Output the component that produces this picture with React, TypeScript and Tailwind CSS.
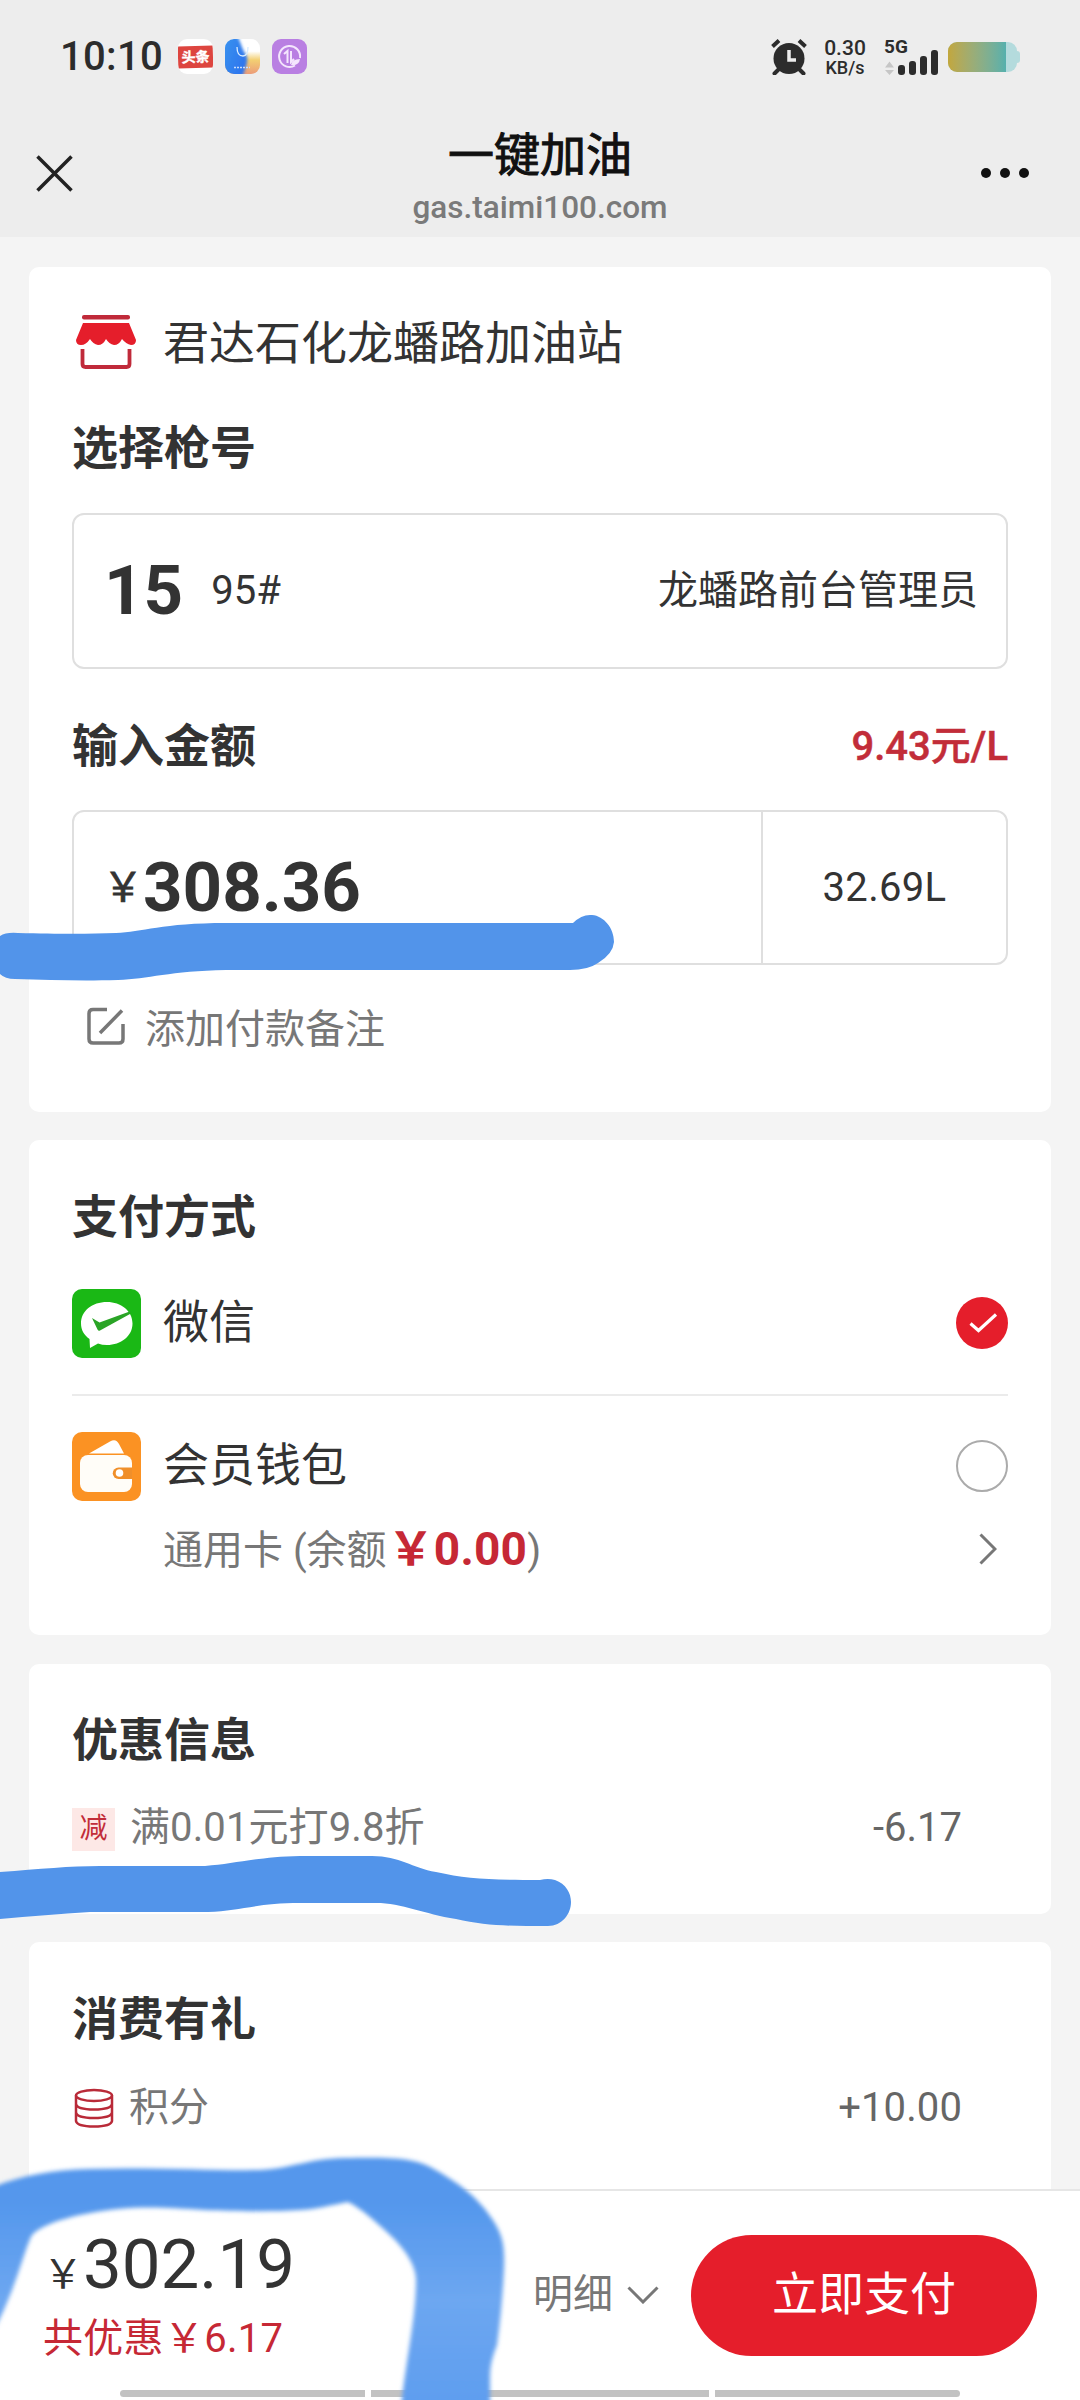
type CardProps = {
    className: string
    children: React.ReactNode
}

function Card({ className, children }: CardProps) {
    return (
        <section className={`mx-[29px] rounded-[10px] bg-white px-[43px] ${className}`}>
            {children}
        </section>
    )
}

function Heading({ children }: { children: React.ReactNode }) {
    return <h2 className="text-[46px] leading-[60px] font-bold">{children}</h2>
}

function StatusBar() {
    return (
        <div className="flex h-[112px] items-start px-[60px] pt-[39px] text-[#2c2c2c]">
            <span className="mt-[-2px] w-[118px] text-[40px] leading-[40px] font-medium tracking-[0.3px]">
                10:10
            </span>

            <div className="flex gap-[12px]">
                <div className="flex h-[35px] w-[35px] items-center overflow-hidden rounded-[9px] bg-white">
                    <span className="flex h-[22px] w-[35px] -rotate-2 items-center justify-center bg-[#dd453f] text-[14px] font-bold text-white [-webkit-text-stroke:0.4px_white]">
                        头条
                    </span>
                </div>

                <svg viewBox="0 0 35 35" className="h-[35px] w-[35px] rounded-[9px]">
                    <defs>
                        <linearGradient id="store-blue" x1="0" y1="0" x2="1" y2="0.6">
                            <stop offset="0" stopColor="#3c97ee" />
                            <stop offset="1" stopColor="#2c74ee" />
                        </linearGradient>
                        <linearGradient id="store-warm" x1="0" y1="0" x2="0" y2="1">
                            <stop offset="0.35" stopColor="#ffffff" />
                            <stop offset="0.6" stopColor="#f3cf72" />
                            <stop offset="1" stopColor="#ec9c79" />
                        </linearGradient>
                        <filter id="store-soft">
                            <feGaussianBlur stdDeviation="1.5" />
                        </filter>
                    </defs>
                    <rect width="35" height="35" fill="url(#store-warm)" />
                    <path
                        d="M-4-4H12C16 4 17 10 21 16C24 20 21 28 17 39H-4Z"
                        fill="url(#store-blue)"
                        filter="url(#store-soft)"
                    />
                    <path
                        d="M12 8Q12 17 18 17Q23 17 23 8"
                        fill="none"
                        stroke="#d8ecff"
                        strokeWidth="1.3"
                    />
                    <path d="M9 28.5H25" stroke="#c7dcfb" strokeWidth="1.6" strokeDasharray="2 1" />
                </svg>

                <svg viewBox="0 0 35 35" className="h-[35px] w-[35px]" fill="none" stroke="#f4e6fd">
                    <rect width="35" height="35" rx="9" fill="#b97fe2" stroke="none" />
                    <path d="M23 26.500A10.500 10.500 0 1 1 28 19" strokeWidth="2" />
                    <path d="M12 15L15.500 12V24M19 12V23L22 20" strokeWidth="2" />
                    <path d="M19 26Q20 20 28 20Q27 27 19 26Z" fill="#f4e6fd" stroke="none" />
                </svg>
            </div>

            <div className="ml-auto flex items-start">
                <svg viewBox="0 0 36 36" className="h-[36px] w-[36px]" fill="none" stroke="#2c2c2c">
                    <circle cx="18" cy="19.500" r="15.500" fill="#2c2c2c" stroke="none" />
                    <path d="M1.500 7.500L8 1.500M34.500 7.500L28 1.500" strokeWidth="4" />
                    <path d="M8 30L3.500 34.500M28 30L32.500 34.500" strokeWidth="4" strokeLinecap="round" />
                    <path d="M18 11V21H25" stroke="#ededed" strokeWidth="3.500" />
                </svg>
                <div className="ml-[16px] w-[44px] text-center font-medium">
                    <p className="text-[21px] leading-[18px]">0.30</p>
                    <p className="mt-[2px] text-[18px] leading-[18px]">KB/s</p>
                </div>
                <div className="relative ml-[17px] h-[36px] w-[56px]">
                    <p className="mt-[-3px] text-[19px] leading-[22px] font-bold">5G</p>
                    <svg viewBox="0 0 56 36" className="absolute inset-0 h-[36px] w-[56px]" fill="#2c2c2c">
                        <path d="M1 28.500L5.500 22.500L10 28.500ZM1 31L5.500 36L10 31Z" fill="#c6c6c6" />
                        <rect x="14" y="26" width="7" height="10" rx="3" />
                        <rect x="25" y="22" width="7" height="14" rx="3" />
                        <rect x="36" y="17" width="7" height="19" rx="3" />
                        <rect x="47" y="11" width="7" height="25" rx="3" />
                    </svg>
                </div>
                <div className="mt-[3px] ml-[8px] flex items-center">
                    <div className="h-[30px] w-[69px] overflow-hidden rounded-[9px] bg-[#b4dbdd]">
                        <div className="h-full w-[58px] bg-linear-to-r from-[#c2a73c] to-[#55b0ad]" />
                    </div>
                    <div className="h-[12px] w-[3px] rounded-r bg-[#b4dbdd]" />
                </div>
            </div>
        </div>
    )
}

function NavBar() {
    return (
        <div className="flex h-[125px] items-start justify-between px-[36px]">
            <svg viewBox="0 0 37 37" className="mt-[43px] h-[37px] w-[37px]" stroke="#222" strokeWidth="3.500">
                <path d="M1.500 1.500L35.500 35.500M35.500 1.500L1.500 35.500" />
            </svg>
            <div className="ml-[27px] flex flex-col items-center">
                <h1 className="mt-[13px] text-[46px] leading-[60px] text-[#111] [-webkit-text-stroke:1px_#111]">
                    一键加油
                </h1>
                <p className="mt-[3px] text-[31.500px] leading-[40px] font-medium text-[#7a7a7a]">
                    gas.taimi100.com
                </p>
            </div>
            <svg viewBox="0 0 50 10" className="mt-[56px] mr-[14px] h-[10px] w-[50px]" fill="#111">
                <circle cx="6" cy="5" r="5" />
                <circle cx="25" cy="5" r="5" />
                <circle cx="44" cy="5" r="5" />
            </svg>
        </div>
    )
}

function StoreIcon() {
    return (
        <svg viewBox="0 0 62 56" className="h-[56px] w-[62px]">
            <rect x="7" y="1" width="48" height="4.500" rx="2" fill="#c02a3a" />
            <path
                d="M8 9H54L61 26Q61 31 56 31Q51 30 47 25Q44 31 39 31Q34 30 31 25Q28 31 23 31Q18 30 15 25Q11 31 6 31Q1 31 1 26Z"
                fill="#e51e2b"
            />
            <path d="M7.500 35V50Q7.500 53 10.500 53H51.500Q54.500 53 54.500 50V35" fill="none" stroke="#c02a3a" strokeWidth="3.800" />
        </svg>
    )
}

function WechatIcon() {
    return (
        <svg viewBox="0 0 69 69" className="h-[69px] w-[69px]">
            <rect width="69" height="69" rx="10" fill="#1ab815" />
            <path
                d="M35 13C49 13 60.500 22 60.500 34.500C60.500 47 49 56 35 56Q30 56 26 54.500L18 59L17.500 50C12 46 9 41 9 34.500C9 22 20 13 35 13Z"
                fill="#fff"
            />
            <path d="M20 29L27.500 33.500L59 22L58 25L28 41.500Q26.500 42.500 25.500 40.500Z" fill="#2aa426" />
        </svg>
    )
}

function WalletIcon() {
    return (
        <svg viewBox="0 0 69 69" className="h-[69px] w-[69px]">
            <rect width="69" height="69" rx="10" fill="#fb9223" />
            <path d="M17 21.500L38 9.500Q44 6 47 12L52 21.500Z" fill="#fff" />
            <rect x="8" y="23" width="52" height="37" rx="8" fill="#fffdf8" />
            <path d="M60 35.500H46.500A5.500 5.500 0 0 0 46.500 47H60Z" fill="#f08f2a" />
            <circle cx="47.500" cy="41" r="3.800" fill="#fff" />
        </svg>
    )
}

function StationCard() {
    return (
        <Card className="h-[845px] pt-[45px]">
            <div className="flex h-[60px] items-center">
                <div className="ml-[3px] w-[88px]">
                    <StoreIcon />
                </div>
                <p className="mt-[2px] text-[46px] leading-[60px]">君达石化龙蟠路加油站</p>
            </div>

            <div className="mt-[46px]">
                <Heading>选择枪号</Heading>
            </div>
            <div className="mt-[35px] flex h-[156px] items-center rounded-[12px] border-2 border-[#dfdfdf] pr-[28px] pl-[30px]">
                <span className="text-[69px] leading-[80px] font-bold">15</span>
                <span className="ml-[28px] text-[40px]">95#</span>
                <span className="ml-auto text-[40px]">龙蟠路前台管理员</span>
            </div>

            <div className="mt-[47px] flex h-[60px] items-center justify-between">
                <Heading>输入金额</Heading>
                <span className="mt-[2px] text-[40px] font-medium text-[#c22d39] [-webkit-text-stroke:0.5px_#c22d39]">
                    9.43元/L
                </span>
            </div>
            <div className="mt-[34px] flex h-[155px] rounded-[12px] border-2 border-[#dfdfdf]">
                <div className="flex flex-1 items-center pl-[29px]">
                    <span className="text-[40px] [-webkit-text-stroke:0.8px_#333]">￥</span>
                    <span className="text-[69px] leading-[80px] font-bold">308.36</span>
                </div>
                <div className="flex w-[245px] items-center justify-center border-l-2 border-[#dfdfdf] text-[40px] tracking-[0.3px]">
                    32.69L
                </div>
            </div>

            <div className="mt-[34px] flex h-[60px] items-center pl-[15px] text-[40px] text-[#777]">
                <svg
                    viewBox="0 0 38 38"
                    className="mt-[-6px] mr-[20px] h-[38px] w-[38px]"
                    fill="none"
                    stroke="#777"
                    strokeWidth="3.500"
                >
                    <path d="M20 2.500H6Q2 2.500 2 6.500V32Q2 36 6 36H32Q36 36 36 32V17M13 26L35 3.500" />
                </svg>
                <span className="mt-[2px]">添加付款备注</span>
            </div>
        </Card>
    )
}

function PaymentCard() {
    return (
        <Card className="mt-[28px] h-[495px] pt-[47px]">
            <Heading>支付方式</Heading>
            <div className="mt-[42px] flex h-[69px] items-center">
                <WechatIcon />
                <span className="mt-[-3px] ml-[22px] text-[46px] leading-[60px]">微信</span>
                <svg viewBox="0 0 52 52" className="mt-[-2px] ml-auto h-[52px] w-[52px]">
                    <circle cx="26" cy="26" r="26" fill="#e51e2b" />
                    <path d="M14.500 26.500L22.500 33.500L40 17.500" fill="none" stroke="#fff" strokeWidth="3.200" />
                </svg>
            </div>
            <div className="mt-[36px] h-[2px] bg-[#ebebeb]" />
            <div className="mt-[36px] flex h-[69px] items-center">
                <WalletIcon />
                <span className="mt-[-3px] ml-[22px] text-[46px] leading-[60px]">会员钱包</span>
                <span className="mt-[-2px] ml-auto h-[52px] w-[52px] rounded-full border-2 border-[#ababab]" />
            </div>
            <div className="mt-[18px] flex h-[60px] items-center pl-[91px] text-[40px] text-[#777]">
                <span className="mt-[3px] whitespace-pre">通用卡 (余额</span>
                <span className="ml-[1px] text-[46px] leading-[60px] font-bold tracking-[0.2px] text-[#c62835]">
                    ￥0.00
                </span>
                <span className="mt-[3px]">)</span>
                <svg viewBox="0 0 18 32" className="mr-[11px] ml-auto h-[32px] w-[18px]" fill="none" stroke="#777" strokeWidth="3">
                    <path d="M1.500 1.500L16 16L1.500 30.500" />
                </svg>
            </div>
        </Card>
    )
}

function DiscountCard() {
    return (
        <Card className="mt-[29px] h-[250px] pt-[46px]">
            <Heading>优惠信息</Heading>
            <div className="mt-[28px] flex h-[60px] items-center text-[40px] text-[#777]">
                <span className="mt-[2px] mr-[15px] flex h-[43px] w-[43px] items-center justify-center bg-[#fde8e6] text-[28px] text-[#c22d39]">
                    减
                </span>
                <span className="tracking-[0.1px]">满0.01元打9.8折</span>
                <span className="mr-[46px] ml-auto text-[#666]">-6.17</span>
            </div>
        </Card>
    )
}

function RewardCard() {
    return (
        <Card className="mt-[28px] h-[247px] rounded-b-none pt-[47px]">
            <Heading>消费有礼</Heading>
            <div className="mt-[29px] flex h-[60px] items-center text-[40px] text-[#777]">
                <svg viewBox="0 0 40 40" className="mt-[-1px] mr-[15px] ml-[2px] h-[40px] w-[40px]" fill="none" stroke="#b92a38" strokeWidth="2.500">
                    <ellipse cx="20" cy="7.500" rx="18" ry="5.500" />
                    <path d="M2 7.500V33Q3 38.500 20 38.500T38 33V7.500M2 16Q3 21.500 20 21.500T38 16M2 24.500Q3 30 20 30T38 24.500" />
                </svg>
                <span>积分</span>
                <span className="mr-[46px] ml-auto tracking-[0.1px] text-[#666]">+10.00</span>
            </div>
        </Card>
    )
}

function CheckoutBar() {
    return (
        <footer className="flex h-[211px] flex-col border-t-2 border-[#e6e6e6] bg-white">
            <div className="flex h-[199px] items-start pt-[34px] pr-[43px] pl-[43px]">
                <div>
                    <div className="flex items-baseline">
                        <span className="text-[40px]">￥</span>
                        <span className="text-[69px] leading-[80px]">302.19</span>
                    </div>
                    <p className="mt-[1px] text-[40px] leading-[66px] tracking-[0.3px] text-[#c62835]">
                        共优惠￥6.17
                    </p>
                </div>
                <div className="mt-[40px] ml-auto flex items-center text-[40px] leading-[60px] text-[#777]">
                    明细
                    <svg viewBox="0 0 32 18" className="mr-[32px] ml-[14px] h-[18px] w-[32px]" fill="none" stroke="#777" strokeWidth="3">
                        <path d="M1.500 1.500L16 16L30.500 1.500" />
                    </svg>
                </div>
                <button className="mt-[10px] h-[121px] w-[346px] rounded-full bg-[#e51e2b] pb-[3px] text-[46px] text-white">
                    立即支付
                </button>
            </div>
            <div className="flex gap-[6px] px-[120px]">
                <div className="h-[7px] w-[245px] rounded-l-full bg-[#c2c2c2]" />
                <div className="h-[7px] w-[338px] bg-[#c2c2c2]" />
                <div className="h-[7px] w-[245px] rounded-r-full bg-[#c2c2c2]" />
            </div>
        </footer>
    )
}

// Hand-drawn marker strokes lying over the page
function MarkerStrokes() {
    return (
        <svg viewBox="0 0 1080 2400" className="pointer-events-none absolute inset-0 h-[2400px] w-[1080px]" fill="#5294ea">
            <defs>
                <linearGradient id="marker" x1="0" y1="2150" x2="0" y2="2400" gradientUnits="userSpaceOnUse">
                    <stop offset="0.2" stopColor="#5497ec" />
                    <stop offset="0.6" stopColor="#6da7f1" />
                    <stop offset="1" stopColor="#5f9eef" />
                </linearGradient>
                <filter id="marker-soft" x="-5%" y="-5%" width="110%" height="110%">
                    <feGaussianBlur stdDeviation="2" />
                </filter>
            </defs>
            <path d="M0 936Q6 932 18 933C60 934 90 934 116 933C142 932 162 923 226 923H573Q582 914 592 915C604 916 614 928 614 942Q613 954 598 963Q588 970 570 970H226C170 971 148 979 118 980C80 981 50 980 15 979Q5 979 0 974Z" />
            <path d="M0 1872C40 1869 70 1866 100 1866H205C235 1864 255 1857 300 1856H372C400 1856 412 1868 436 1872C467 1879 490 1880 540 1880Q548 1878 555 1880C566 1884 571 1893 571 1902C571 1914 562 1926 548 1926C510 1926 486 1926 456 1919C424 1914 402 1903 376 1903H300C256 1903 240 1911 208 1912H90C60 1914 30 1916 0 1919Z" />
            <path
                d="M-10 2188C20 2176 50 2170 90 2169C150 2167 220 2171 260 2170C295 2168 305 2159 345 2158C390 2157 415 2158 432 2168C458 2182 478 2198 490 2216C503 2234 505 2245 504 2270Q502 2310 497 2345Q490 2362 490 2375V2410H401C404 2370 416 2320 416 2280C416 2265 404 2248 390 2235C375 2221 362 2209 348 2202C330 2205 320 2209 300 2210C270 2212 230 2211 205 2210C170 2208 150 2206 118 2209C80 2213 45 2222 32 2235C24 2250 16 2290 -8 2334Z"
                fill="url(#marker)"
                filter="url(#marker-soft)"
            />
        </svg>
    )
}

export default function App() {
    return (
        <main className="relative h-[2400px] w-[1080px] overflow-hidden bg-[#f4f4f4] font-['Roboto','Noto_Sans_CJK_SC',sans-serif] text-[#333]">
            <header className="h-[237px] bg-[#ededed]">
                <StatusBar />
                <NavBar />
            </header>

            <div className="pt-[30px]">
                <StationCard />
                <PaymentCard />
                <DiscountCard />
                <RewardCard />
            </div>

            <CheckoutBar />
            <MarkerStrokes />
        </main>
    )
}
